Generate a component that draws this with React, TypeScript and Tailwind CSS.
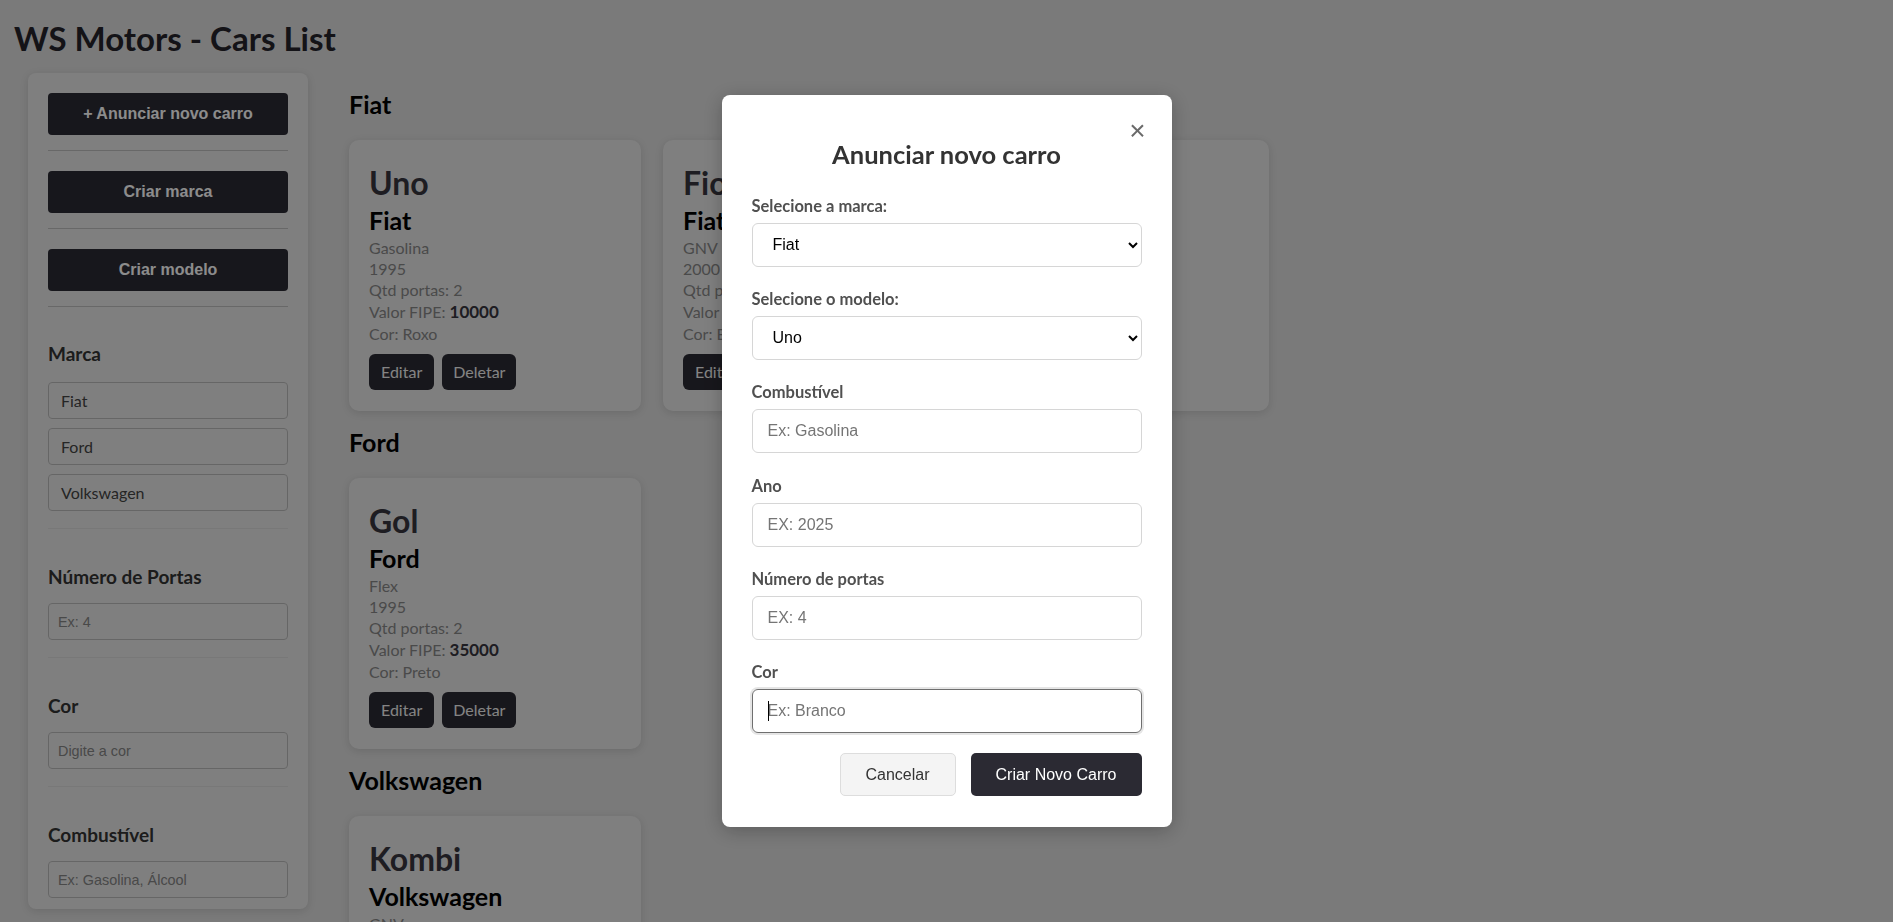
import React from "react";

const lato = { fontFamily: "Lato, 'Noto Sans', sans-serif" };
const arial = { fontFamily: "'Liberation Sans', Arial, sans-serif" };

type Car = { model: string; brand: string; fuel: string; year: string; doors: string; price: string; color: string };

const groups: { brand: string; cars: Car[] }[] = [
  {
    brand: "Fiat",
    cars: [
      { model: "Uno", brand: "Fiat", fuel: "Gasolina", year: "1995", doors: "2", price: "10000", color: "Roxo" },
      { model: "Fiorino", brand: "Fiat", fuel: "GNV", year: "2000", doors: "2", price: "30000", color: "Branco" },
      { model: "Palio", brand: "Fiat", fuel: "Flex", year: "2010", doors: "4", price: "25000", color: "Prata" },
    ],
  },
  {
    brand: "Ford",
    cars: [{ model: "Gol", brand: "Ford", fuel: "Flex", year: "1995", doors: "2", price: "35000", color: "Preto" }],
  },
  {
    brand: "Volkswagen",
    cars: [{ model: "Kombi", brand: "Volkswagen", fuel: "GNV", year: "1980", doors: "3", price: "20000", color: "Branco" }],
  },
];

function CarCard({ car }: { car: Car }) {
  return (
    <div className="w-[292px] rounded-[10px] bg-[#e8e8e8] shadow-[0_2px_8px_rgba(0,0,0,0.12)] px-[20px] pt-[20px] pb-[21px]">
      <h2 className="mt-[6px] text-[32px] font-bold leading-[34px] text-[#38363f]">{car.model}</h2>
      <h3 className="mt-[6px] text-[25px] font-bold leading-[29px] text-black">{car.brand}</h3>
      <div className="mt-[2px] text-[16px] text-[#878787]">
        <p className="leading-[21px]">{car.fuel}</p>
        <p className="leading-[21px]">{car.year}</p>
        <p className="leading-[21px]">Qtd portas: {car.doors}</p>
        <p className="leading-[23px]">
          Valor FIPE: <span className="text-[17px] font-bold text-[#37363e]">{car.price}</span>
        </p>
        <p className="leading-[21px]">Cor: {car.color}</p>
      </div>
      <div className="mt-[10px] flex gap-[8px]">
        <button className="h-[36px] rounded-[6px] bg-[#2b2a33] px-[12px] text-[16px] text-[#f0f0f0]">Editar</button>
        <button className="h-[36px] rounded-[6px] bg-[#2b2a33] px-[11px] text-[16px] text-[#f0f0f0]">Deletar</button>
      </div>
    </div>
  );
}

function SideButton({ children }: { children: React.ReactNode }) {
  return (
    <button className="h-[42px] w-full rounded-[4px] bg-[#2b2a33] text-[16px] font-bold text-white" style={arial}>
      {children}
    </button>
  );
}

function SideInput({ placeholder }: { placeholder: string }) {
  return (
    <input
      placeholder={placeholder}
      className="h-[37px] w-full rounded-[4px] border border-[#bbbbbb] bg-[#e8e8e8] px-[9px] text-[14.4px] text-[#333] placeholder:text-[#858585] outline-none"
      style={arial}
    />
  );
}

function Field({ label, children }: { label: string; children: React.ReactNode }) {
  return (
    <div className="mb-[22.4px]">
      <label className="mb-[7px] block text-[16.5px] font-bold leading-[20px] text-[#505050]">{label}</label>
      {children}
    </div>
  );
}

export default function App() {
  return (
    <div className="min-h-screen bg-[#dedede] pb-[40px]" style={lato}>
      <h1 className="px-[14px] pt-[18px] text-[33px] font-bold leading-[40px] text-[#25242b]">WS Motors - Cars List</h1>
      <div className="mt-[15px] flex items-start">
        <aside className="ml-[28px] w-[280px] rounded-[8px] bg-[#e8e8e8] shadow-[0_2px_8px_rgba(0,0,0,0.12)] px-[20px] pt-[20px] pb-[11px]">
          <SideButton>+ Anunciar novo carro</SideButton>
          <div className="mt-[15px] border-t border-[#bdbdbd]" />
          <div className="mt-[20px]">
            <SideButton>Criar marca</SideButton>
          </div>
          <div className="mt-[15px] border-t border-[#bdbdbd]" />
          <div className="mt-[20px]">
            <SideButton>Criar modelo</SideButton>
          </div>
          <div className="mt-[15px] border-t border-[#bdbdbd]" />

          <div className="border-b border-[#dadada] pt-[35px] pb-[17px]">
            <h4 className="mb-[17px] text-[19px] font-bold leading-[23px] text-[#333]">Marca</h4>
            <div className="flex flex-col gap-[9px]">
              {["Fiat", "Ford", "Volkswagen"].map((b) => (
                <div
                  key={b}
                  className="flex h-[37px] items-center rounded-[4px] border border-[#bbbbbb] px-[12px] text-[16px] text-[#444]"
                >
                  {b}
                </div>
              ))}
            </div>
          </div>
          <div className="border-b border-[#dadada] pt-[36px] pb-[17px]">
            <h4 className="mb-[15px] text-[19px] font-bold leading-[23px] text-[#333]">Número de Portas</h4>
            <SideInput placeholder="Ex: 4" />
          </div>
          <div className="border-b border-[#dadada] pt-[36px] pb-[17px]">
            <h4 className="mb-[15px] text-[19px] font-bold leading-[23px] text-[#333]">Cor</h4>
            <SideInput placeholder="Digite a cor" />
          </div>
          <div className="pt-[36px]">
            <h4 className="mb-[15px] text-[19px] font-bold leading-[23px] text-[#333]">Combustível</h4>
            <SideInput placeholder="Ex: Gasolina, Álcool" />
          </div>
        </aside>

        <main className="ml-[41px]">
          {groups.map((g) => (
            <section key={g.brand}>
              <h2 className="mt-[18px] mb-[23px] text-[25px] font-bold leading-[26px] text-black">{g.brand}</h2>
              <div className="flex gap-[22px]">
                {g.cars.map((c) => (
                  <CarCard key={c.model} car={c} />
                ))}
              </div>
            </section>
          ))}
        </main>
      </div>

      {/* Modal overlay */}
      <div className="fixed inset-0 flex items-center justify-center bg-black/45">
        <div className="relative w-[450px] rounded-[8px] bg-white px-[30px] pt-[30px] pb-[31px] shadow-[0_4px_20px_rgba(0,0,0,0.25)]">
          <button className="absolute right-[26px] top-[19px] text-[28px] leading-[34px] text-[#6a6a6a]" style={arial}>
            ×
          </button>
          <h2 className="mt-[14px] mb-[27px] text-center text-[25.5px] font-bold leading-[30px] text-[#333]">
            Anunciar novo carro
          </h2>
          <Field label="Selecione a marca:">
            <select
              className="h-[44px] w-full rounded-[6px] border border-[#d6d6d6] bg-white pl-[16px] pr-[6px] text-[16px] text-black"
              style={arial}
              defaultValue="Fiat"
            >
              <option>Fiat</option>
              <option>Ford</option>
              <option>Volkswagen</option>
            </select>
          </Field>
          <Field label="Selecione o modelo:">
            <select
              className="h-[44px] w-full rounded-[6px] border border-[#d6d6d6] bg-white pl-[16px] pr-[6px] text-[16px] text-black"
              style={arial}
              defaultValue="Uno"
            >
              <option>Uno</option>
              <option>Fiorino</option>
            </select>
          </Field>
          <Field label="Combustível">
            <input
              placeholder="Ex: Gasolina"
              className="h-[44px] w-full rounded-[6px] border border-[#d6d6d6] px-[15px] text-[16px] placeholder:text-[#757575] outline-none"
              style={arial}
            />
          </Field>
          <Field label="Ano">
            <input
              placeholder="EX: 2025"
              className="h-[44px] w-full rounded-[6px] border border-[#d6d6d6] px-[15px] text-[16px] placeholder:text-[#757575] outline-none"
              style={arial}
            />
          </Field>
          <Field label="Número de portas">
            <input
              placeholder="EX: 4"
              className="h-[44px] w-full rounded-[6px] border border-[#d6d6d6] px-[15px] text-[16px] placeholder:text-[#757575] outline-none"
              style={arial}
            />
          </Field>
          <div>
            <label className="mb-[7px] block text-[16.5px] font-bold leading-[20px] text-[#505050]">Cor</label>
            <div className="relative">
              <input
                placeholder="Ex: Branco"
                className="h-[44px] w-full rounded-[6px] border border-[#6f6f6f] px-[15px] text-[16px] placeholder:text-[#757575] outline-none shadow-[0_0_0_2px_rgba(0,0,0,0.1)]"
                style={arial}
              />
              <span className="absolute left-[16px] top-[12px] h-[20px] w-[1px] bg-black" />
            </div>
          </div>
          <div className="mt-[20px] flex justify-end gap-[15px]" style={arial}>
            <button className="h-[43px] w-[116px] rounded-[5px] border border-[#dddddd] bg-[#f4f4f4] text-[16px] text-[#333]">
              Cancelar
            </button>
            <button className="h-[43px] w-[171px] rounded-[5px] bg-[#2b2a33] text-[16px] text-white">Criar Novo Carro</button>
          </div>
        </div>
      </div>
    </div>
  );
}
